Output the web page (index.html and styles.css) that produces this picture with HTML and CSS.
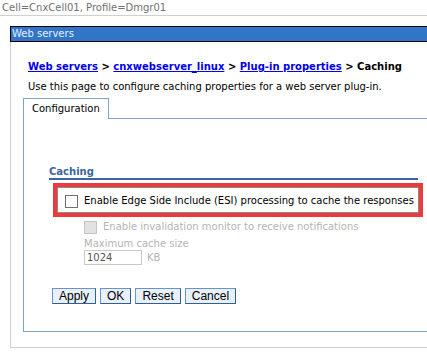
FILE: index.html
```html
<!DOCTYPE html>
<html lang="en">
  <head>
    <meta charset="UTF-8" />
    <title>Caching</title>
    <link rel="stylesheet" href="styles.css">
  </head>
  <body>
    <div class="context">Cell=CnxCell01, Profile=Dmgr01</div>

    <div class="portlet">
      <div class="portlet-title">Web servers</div>
      <div class="portlet-body">
        <div class="breadcrumb">
          <a href="#">Web servers</a> &gt; <a href="#">cnxwebserver_linux</a> &gt;
          <a href="#">Plug-in properties</a> &gt; Caching
        </div>
        <p class="description">Use this page to configure caching properties for a web server plug-in.</p>

        <div class="tabs">
          <div class="tab">Configuration</div>
          <div class="tab-rest"></div>
        </div>

        <div class="panel">
          <h3 class="section-title">Caching</h3>

          <div class="highlight">
            <label class="check">
              <span class="box"></span>
              Enable Edge Side Include (ESI) processing to cache the responses
            </label>
          </div>

          <div class="sub-options">
            <label class="check disabled">
              <span class="box"></span>
              Enable invalidation monitor to receive notifications
            </label>
            <div class="field disabled">
              <div class="field-label">Maximum cache size</div>
              <div class="field-row">
                <span class="input">1024</span>
                <span class="unit">KB</span>
              </div>
            </div>
          </div>

          <div class="buttons">
            <button type="button">Apply</button>
            <button type="button">OK</button>
            <button type="button">Reset</button>
            <button type="button">Cancel</button>
          </div>
        </div>
      </div>
    </div>
  </body>
</html>
```

FILE: styles.css
```css
body {
  margin: 0;
  font-family: "DejaVu Sans", sans-serif;
  font-size: 10px;
  color: #000;
  background: #fff;
  overflow: hidden;
}
.context {
  height: 15px;
  line-height: 15px;
  padding-left: 2px;
  color: #707070;
  border-bottom: 1px solid #cfcfcf;
}
.portlet {
  margin: 10px 0 0 10px;
}
.portlet-title {
  height: 14px;
  line-height: 14px;
  padding-left: 1px;
  color: #e8f0ff;
  background: #3176c6;
  border: 1px solid #000;
  border-right: none;
}
.portlet-body {
  height: 287px;
  padding: 18px 0 0 12px;
  border-left: 1px solid #cfcfcf;
  border-bottom: 1px solid #cfcfcf;
}
.breadcrumb {
  padding-left: 5px;
  font-weight: bold;
  line-height: 14px;
}
.breadcrumb a {
  color: #0000ee;
}
.description {
  margin: 6px 0 0;
  padding-left: 5px;
  line-height: 14px;
}
.tabs {
  display: flex;
  margin-top: 4px;
}
.tab {
  width: 76px;
  height: 20px;
  line-height: 20px;
  padding-left: 8px;
  border: 1px solid #80a0d4;
  border-bottom: none;
}
.tab-rest {
  flex: 1;
  border-bottom: 1px solid #80a0d4;
}
.panel {
  height: 165px;
  padding: 47px 0 0 25px;
  border-left: 1px solid #80a0d4;
  border-bottom: 1px solid #80a0d4;
}
.section-title {
  margin: 0;
  width: 369px;
  font-size: 10px;
  line-height: 12px;
  color: #3a66a0;
  border-bottom: 2px solid #3a66a0;
}
.highlight {
  width: 354px;
  margin: 3px 0 0 4px;
  padding: 7px 0 5px 8px;
  border: 4px solid #ee3a3a;
  box-shadow: inset 0 0 0 1px #8a8a8a;
}
.check {
  display: flex;
  align-items: center;
  gap: 6px;
  line-height: 14px;
  white-space: nowrap;
}
.box {
  width: 11px;
  height: 11px;
  border: 1px solid #707070;
  background: #fff;
}
.sub-options {
  padding: 3px 0 0 35px;
}
.disabled {
  color: #b4b4b4;
}
.check.disabled .box {
  background: #e2e2e2;
  border-color: #c4c4c4;
}
.field-label {
  margin-top: 4px;
  line-height: 12px;
}
.field-row {
  display: flex;
  align-items: center;
  gap: 5px;
}
.input {
  width: 54px;
  height: 13px;
  line-height: 13px;
  padding-left: 2px;
  color: #555;
  border: 1px solid #c8c8c8;
}
.buttons {
  display: flex;
  gap: 4px;
  margin-top: 23px;
  padding-left: 3px;
}
button {
  height: 16px;
  padding: 0 6px;
  font-family: "Liberation Sans", sans-serif;
  font-size: 12px;
  line-height: 13px;
  color: #000;
  background: #e8f0fc;
  border: 1px solid #6a94c8;
  border-bottom-color: #2f5f9a;
  border-right-color: #2f5f9a;
  border-radius: 0;
}
```
